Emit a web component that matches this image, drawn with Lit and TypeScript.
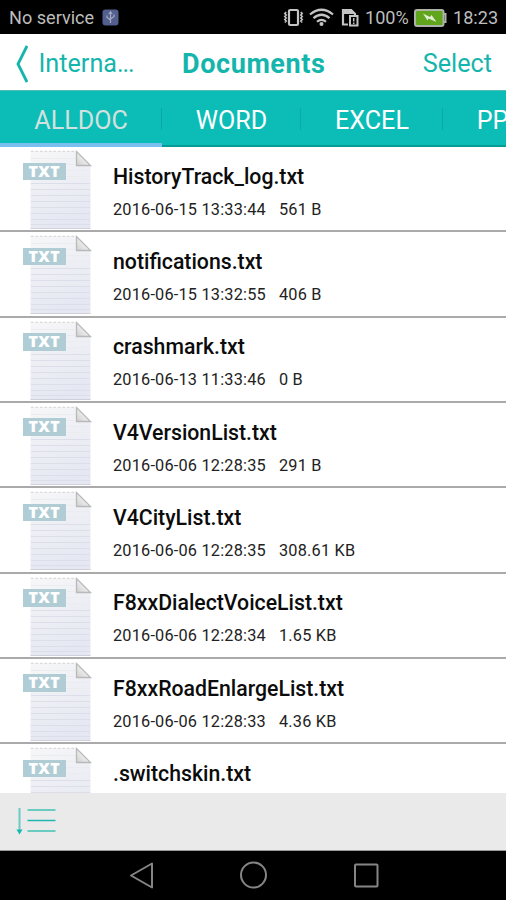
import { LitElement, html, css, svg, nothing } from "lit";
import { customElement, property } from "lit/decorators.js";

const FILES: [string, string, string][] = [
  ["HistoryTrack_log.txt", "2016-06-15 13:33:44", "561 B"],
  ["notifications.txt", "2016-06-15 13:32:55", "406 B"],
  ["crashmark.txt", "2016-06-13 11:33:46", "0 B"],
  ["V4VersionList.txt", "2016-06-06 12:28:35", "291 B"],
  ["V4CityList.txt", "2016-06-06 12:28:35", "308.61 KB"],
  ["F8xxDialectVoiceList.txt", "2016-06-06 12:28:34", "1.65 KB"],
  ["F8xxRoadEnlargeList.txt", "2016-06-06 12:28:33", "4.36 KB"],
  [".switchskin.txt", "", ""],
];

@customElement("txt-icon")
class TxtIcon extends LitElement {
  static styles = css`
    :host { display: block; flex: none; position: relative; width: 70px; height: 81px; }
    svg { display: block; }
    .tag {
      position: absolute; left: 0; top: 12.5px; width: 42.5px; height: 17.5px;
      background: #b0cdd5; color: #fff;
      font: 800 16px/17.5px "Open Sans", sans-serif;
      text-align: center; letter-spacing: 0.4px;
    }
  `;
  render() {
    return html`
      <svg width="70" height="81" viewBox="0 0 70 81">
        <defs>
          <linearGradient id="paper" x1="0" y1="0" x2="0.3" y2="1">
            <stop offset="0" stop-color="#f7f7f8" />
            <stop offset="0.5" stop-color="#eeeff5" />
            <stop offset="1" stop-color="#e5e8f2" />
          </linearGradient>
          <linearGradient id="fold" x1="0" y1="1" x2="1" y2="0">
            <stop offset="0" stop-color="#cfcfcf" />
            <stop offset="0.5" stop-color="#ececec" />
            <stop offset="1" stop-color="#bdbdbd" />
          </linearGradient>
        </defs>
        <path d="M7.5 1H53L67.5 15.5V79H7.5Z" fill="url(#paper)" />
        <path d="M8 1.3H53" stroke="#d2d2d2" stroke-width="1" stroke-dasharray="2.5 2" />
        ${[34, 40, 46, 52, 58, 64, 70, 75].map(
          (y) => svg`<path d=${`M8 ${y - 0.5}H67`} stroke="#dcdfea" stroke-width="1" />`
        )}
        ${[9, 15, 21, 27].map(
          (y) => svg`<path d=${`M8 ${y - 0.5}H${y < 16 ? 52 : 67}`} stroke="#ebecf0" stroke-width="1" />`
        )}
        <path d="M7.5 78.5H67.5" stroke="#cfd0d8" />
        <path d="M53.5 1.5V15.5H67.5Z" fill="url(#fold)" stroke="#b9b9b9" stroke-width="1.3" />
      </svg>
      <span class="tag">TXT</span>
    `;
  }
}

@customElement("file-row")
class FileRow extends LitElement {
  @property() name = "";
  @property() date = "";
  @property() size = "";
  static styles = css`
    :host {
      display: flex; box-sizing: border-box; flex: none; height: 85.33px;
      padding: 3px 0 0 23px; border-bottom: 2px solid #aaa; color: #0c0c0c;
    }
    .text { margin-left: 20px; padding-top: 12.7px; white-space: nowrap; }
    .name { font-size: 21.25px; line-height: 28px; font-weight: 500; }
    .meta {
      display: flex; gap: 13px; margin-top: 8px; font-size: 16.3px; line-height: 22px;
      letter-spacing: 0.2px; color: #222;
    }
    .date { width: 153px; }
  `;
  render() {
    return html`
      <txt-icon></txt-icon>
      <div class="text">
        <div class="name">${this.name}</div>
        ${this.date
          ? html`<div class="meta"><span class="date">${this.date}</span><span>${this.size}</span></div>`
          : nothing}
      </div>
    `;
  }
}

@customElement("app-root")
class AppRoot extends LitElement {
  static styles = css`
    :host {
      display: flex; flex-direction: column; width: 506px; height: 900px;
      overflow: hidden; background: #fff; font-family: Roboto, sans-serif;
    }
    svg { display: block; flex: none; }
    .status {
      display: flex; align-items: center; flex: none; box-sizing: border-box; height: 34px;
      padding: 1px 8px 0 9px; background: #000; color: #bdbdbd; font-size: 18.1px;
    }
    .service { width: 86px; margin-right: 7px; white-space: nowrap; }
    .icons { margin-left: auto; }
    .percent { width: 44px; margin: 0 5px 0 5px; white-space: nowrap; }
    .clock { width: 45px; margin-left: 6px; white-space: nowrap; }
    .header {
      display: grid; grid-template-columns: 182px 1fr auto; align-items: center; flex: none;
      box-sizing: border-box; height: 56px; padding: 3px 14px 0 0; color: #14b5ac; font-size: 25.2px;
    }
    .back { display: flex; align-items: center; padding-left: 16px; gap: 10.5px; }
    .dots { letter-spacing: -1.1px; }
    .title { font-weight: 700; font-size: 27px; letter-spacing: 0.6px; padding-top: 1px; }
    .tabs {
      display: flex; flex: none; box-sizing: border-box; height: 57px;
      background: #0bbdb6; color: #fff; font-size: 25.1px; border-top: 1px solid #50bcb7;
    }
    .tab {
      display: flex; align-items: center; justify-content: center; flex: none; box-sizing: border-box;
      position: relative; padding-top: 4px; border-bottom: 2px solid #079b95;
    }
    .tab::after {
      content: ""; position: absolute; right: 0; top: 17px; width: 1px; height: 22px; background: #09aaa4;
    }
    .all { width: 162px; color: #d3e1de; border-bottom: 4px solid #79bff0; padding-top: 6px; }
    .word { width: 139px; }
    .excel { width: 142px; }
    .ppt { width: 114px; }
    .list { display: flex; flex-direction: column; flex: 1; min-height: 0; overflow: hidden; }
    .footer {
      display: flex; align-items: center; flex: none; box-sizing: border-box; height: 58px;
      padding: 0 0 1px 16px; background: #eaeaea; border-bottom: 1px solid #999;
    }
    .nav { flex: none; height: 49px; background: #000; }
  `;
  render() {
    return html`
      <div class="status">
        <span class="service">No service</span>
        <svg width="17" height="17" viewBox="0 0 17 17">
          <rect x="0.5" y="0.5" width="16" height="16" rx="3" fill="#53608f" />
          <path d="M8.5 14V3M8.5 11L5 8.5V6.5M8.5 10L12 7.5V5.5M6.8 5L8.5 2.8L10.2 5" fill="none" stroke="#a5aac0" stroke-width="1.2" />
        </svg>
        <svg class="icons" width="77" height="20" viewBox="0 0 77 20">
          <g fill="none" stroke="#c4c4c4">
            <rect x="6" y="2" width="9" height="15" rx="1.2" stroke-width="2.2" />
            <path d="M3.2 4L1.8 5.5L3.2 7L1.8 8.5L3.2 10L1.8 11.5L3.2 13L1.8 14.5M17.8 4L19.2 5.5L17.8 7L19.2 8.5L17.8 10L19.2 11.5L17.8 13L19.2 14.5" stroke-width="1.6" />
            <path d="M27 6.5Q38.5 -3 50 6.5M30.5 10.2Q38.5 3.3 46.5 10.2M34 13.8Q38.5 9.8 43 13.8" stroke-width="2.2" />
            <path d="M65 16.5H60V2H68L72 6V8" stroke-width="2.2" />
            <path d="M59 1H68.5L73 6H59Z" fill="#c4c4c4" stroke="none" />
            <rect x="67" y="8" width="7.5" height="9.5" stroke-width="2" />
            <path d="M70.7 10V13.5M70.7 14.5V16" stroke-width="1.5" />
          </g>
          <circle cx="38.5" cy="16" r="2" fill="#c4c4c4" />
        </svg>
        <span class="percent">100%</span>
        <svg width="33" height="18" viewBox="0 0 33 18">
          <rect x="1" y="1" width="28.5" height="16" rx="2" fill="#60a51b" stroke="#adb3a8" stroke-width="2" />
          <path d="M30 5H31.5V13H30" fill="none" stroke="#adb3a8" stroke-width="2" />
          <path d="M9 4.5L16 8L17.5 6L22.5 13L14.5 9.5L13.5 11.5Z" fill="#e2edd8" />
        </svg>
        <span class="clock">18:23</span>
      </div>
      <div class="header">
        <div class="back">
          <svg width="12" height="38" viewBox="0 0 12 38">
            <path d="M11 1L2 19L11 37" fill="none" stroke="#14b5ac" stroke-width="2.8" />
          </svg>
          <span>Interna<span class="dots">...</span></span>
        </div>
        <span class="title">Documents</span>
        <span>Select</span>
      </div>
      <div class="tabs">
        <div class="tab all">ALLDOC</div>
        <div class="tab word">WORD</div>
        <div class="tab excel">EXCEL</div>
        <div class="tab ppt">PPT</div>
      </div>
      <div class="list">
        ${FILES.map(([n, d, s]) => html`<file-row .name=${n} .date=${d} .size=${s}></file-row>`)}
      </div>
      <div class="footer">
        <svg width="41" height="30" viewBox="0 0 41 30">
          <path d="M3.5 2V26" stroke="#6acbc5" stroke-width="2" />
          <path d="M0.5 23.5H6.5L3.5 28.5Z" fill="#17b8b0" />
          <path d="M11.5 4H39.5M11.5 25H39.5" stroke="#6acbc1" stroke-width="2" />
          <path d="M11.5 14.5H39.5" stroke="#20b6b0" stroke-width="1.5" />
        </svg>
      </div>
      <svg class="nav" width="506" height="49" viewBox="0 0 506 49">
        <g fill="none" stroke="#858585" stroke-width="2" stroke-linejoin="round">
          <path d="M152 12.5V36.5L131 24.5Z" />
          <circle cx="253.5" cy="24" r="12.5" />
          <rect x="355" y="13.5" width="22.5" height="22" rx="1" />
        </g>
      </svg>
    `;
  }
}
